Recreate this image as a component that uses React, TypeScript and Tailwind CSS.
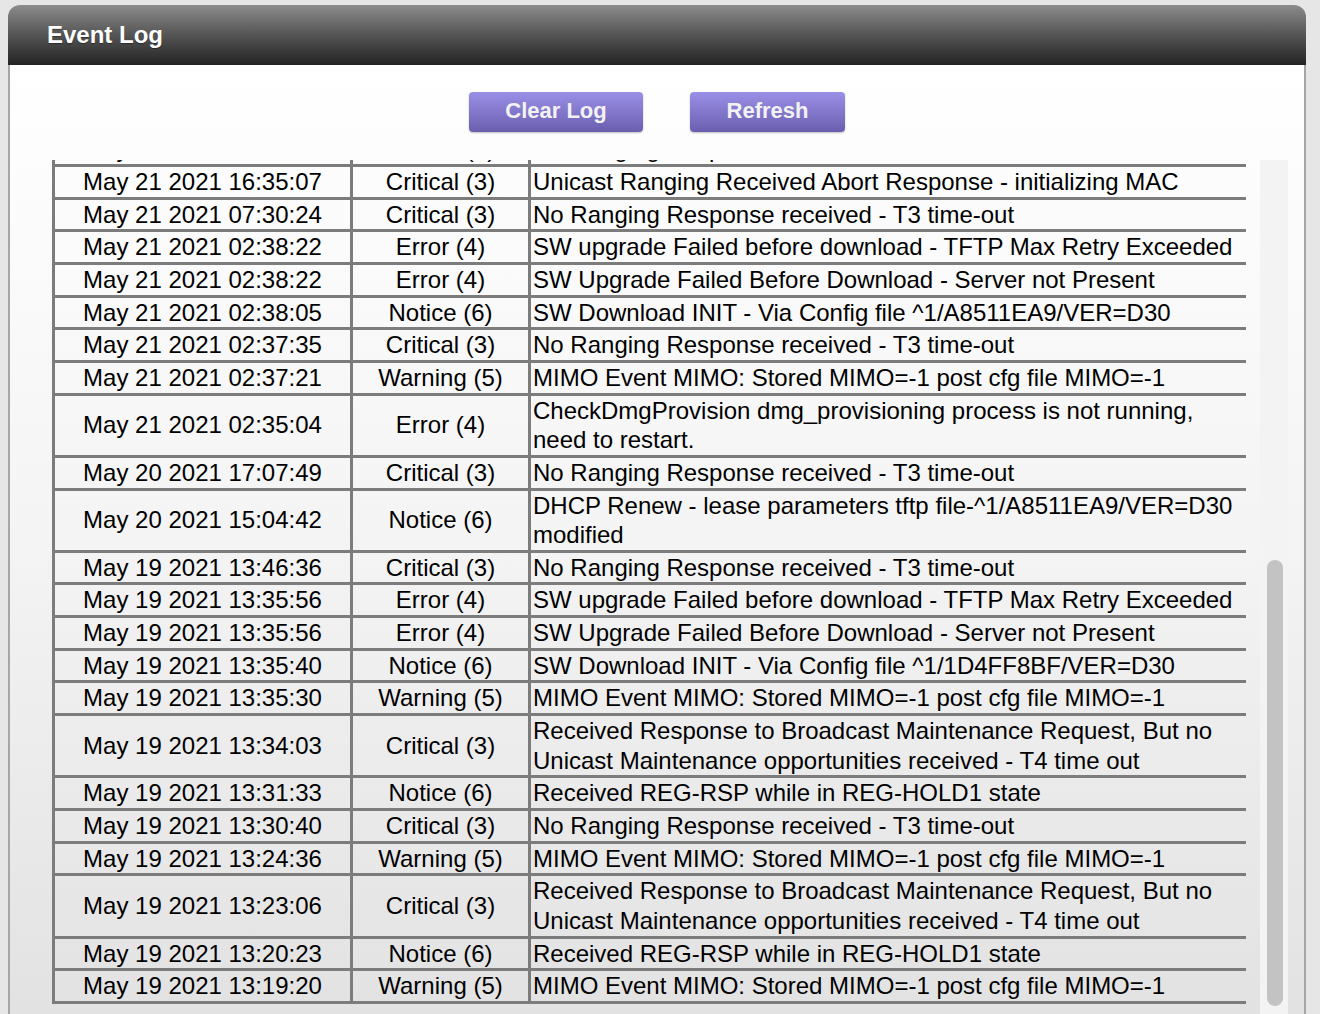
const rows: [string, string, string][] = [
  ['May 21 2021 17:12:30', 'Critical (3)', 'No Ranging Response received - T3 time-out'],
  ['May 21 2021 16:35:07', 'Critical (3)', 'Unicast Ranging Received Abort Response - initializing MAC'],
  ['May 21 2021 07:30:24', 'Critical (3)', 'No Ranging Response received - T3 time-out'],
  ['May 21 2021 02:38:22', 'Error (4)', 'SW upgrade Failed before download - TFTP Max Retry Exceeded'],
  ['May 21 2021 02:38:22', 'Error (4)', 'SW Upgrade Failed Before Download - Server not Present'],
  ['May 21 2021 02:38:05', 'Notice (6)', 'SW Download INIT - Via Config file ^1/A8511EA9/VER=D30'],
  ['May 21 2021 02:37:35', 'Critical (3)', 'No Ranging Response received - T3 time-out'],
  ['May 21 2021 02:37:21', 'Warning (5)', 'MIMO Event MIMO: Stored MIMO=-1 post cfg file MIMO=-1'],
  ['May 21 2021 02:35:04', 'Error (4)', 'CheckDmgProvision dmg_provisioning process is not running, need to restart.'],
  ['May 20 2021 17:07:49', 'Critical (3)', 'No Ranging Response received - T3 time-out'],
  ['May 20 2021 15:04:42', 'Notice (6)', 'DHCP Renew - lease parameters tftp file-^1/A8511EA9/VER=D30 modified'],
  ['May 19 2021 13:46:36', 'Critical (3)', 'No Ranging Response received - T3 time-out'],
  ['May 19 2021 13:35:56', 'Error (4)', 'SW upgrade Failed before download - TFTP Max Retry Exceeded'],
  ['May 19 2021 13:35:56', 'Error (4)', 'SW Upgrade Failed Before Download - Server not Present'],
  ['May 19 2021 13:35:40', 'Notice (6)', 'SW Download INIT - Via Config file ^1/1D4FF8BF/VER=D30'],
  ['May 19 2021 13:35:30', 'Warning (5)', 'MIMO Event MIMO: Stored MIMO=-1 post cfg file MIMO=-1'],
  ['May 19 2021 13:34:03', 'Critical (3)', 'Received Response to Broadcast Maintenance Request, But no Unicast Maintenance opportunities received - T4 time out'],
  ['May 19 2021 13:31:33', 'Notice (6)', 'Received REG-RSP while in REG-HOLD1 state'],
  ['May 19 2021 13:30:40', 'Critical (3)', 'No Ranging Response received - T3 time-out'],
  ['May 19 2021 13:24:36', 'Warning (5)', 'MIMO Event MIMO: Stored MIMO=-1 post cfg file MIMO=-1'],
  ['May 19 2021 13:23:06', 'Critical (3)', 'Received Response to Broadcast Maintenance Request, But no Unicast Maintenance opportunities received - T4 time out'],
  ['May 19 2021 13:20:23', 'Notice (6)', 'Received REG-RSP while in REG-HOLD1 state'],
  ['May 19 2021 13:19:20', 'Warning (5)', 'MIMO Event MIMO: Stored MIMO=-1 post cfg file MIMO=-1'],
];

function Button({ label, width }: { label: string; width: string }) {
  return (
    <button
      type="button"
      className={`${width} h-[40px] rounded-[4px] bg-gradient-to-b from-[#9b90e8] to-[#6a5fae] pb-[4px] text-[22px] font-bold text-[#f2f2f2] shadow-[0_1px_2px_rgba(0,0,0,0.25)]`}
    >
      {label}
    </button>
  );
}

export default function App() {
  return (
    <div className="h-[1014px] overflow-hidden bg-[#e6e6e6] pl-[8px] pr-[14px] pt-[5px] font-['Liberation_Sans',Arial,sans-serif] text-black">
      <div className="flex h-full flex-col">
        <div className="flex h-[60px] shrink-0 items-center rounded-t-[12px] bg-gradient-to-b from-[#8c8c8c] to-[#242424] pl-[39px]">
          <h1 className="text-[24px] font-bold text-white [text-shadow:0_1px_1px_rgba(0,0,0,0.4)]">Event Log</h1>
        </div>

        <div className="flex min-h-0 flex-1 flex-col border-x-2 border-[#a6a6a6] bg-gradient-to-b from-white via-[#f4f4f4] to-[#e2e2e2]">
          <div className="flex justify-center gap-[47px] pt-[27px] pb-[28px]">
            <Button label="Clear Log" width="w-[174px]" />
            <Button label="Refresh" width="w-[155px]" />
          </div>

          <div className="flex min-h-0 flex-1 pl-[42px]">
            <div className="flex w-[1194px] flex-col justify-end overflow-hidden pb-[10px]">
              <table className="w-[1194px] shrink-0 table-fixed border-collapse text-[24px] leading-[29.65px]">
                <colgroup>
                  <col className="w-[298px]" />
                  <col className="w-[178px]" />
                  <col className="w-[718px]" />
                </colgroup>
                <tbody>
                  {rows.map(([date, level, msg], i) => (
                    <tr key={i}>
                      <td className="border-[3px] border-[#7c7c7c] p-0 text-center">{date}</td>
                      <td className="border-[3px] border-[#7c7c7c] p-0 text-center">{level}</td>
                      <td className="border-[3px] border-[#7c7c7c] p-0 pl-[2px] text-left">{msg}</td>
                    </tr>
                  ))}
                </tbody>
              </table>
            </div>

            <div className="ml-[14px] flex w-[28px] flex-col justify-end bg-[#f3f3f3] pb-[8px] pl-[7px]">
              <div className="h-[446px] w-[16px] rounded-full bg-[#c3c3c3]" />
            </div>
          </div>
        </div>
      </div>
    </div>
  );
}
